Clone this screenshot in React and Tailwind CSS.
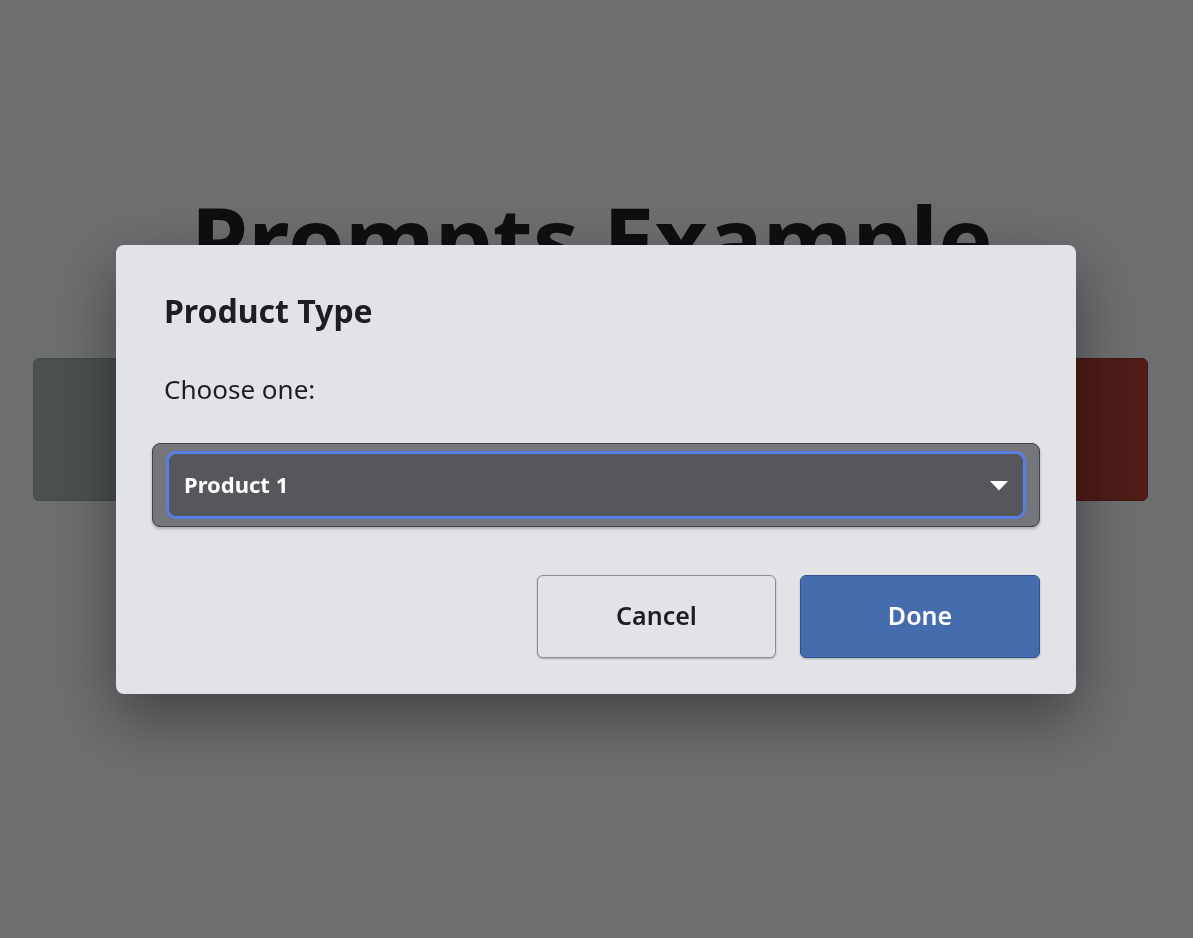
import { useState } from "react";

function App() {
  const [product, setProduct] = useState("Product 1");

  return (
    <div
      className="relative min-h-screen w-full overflow-hidden bg-[#6d6e70]"
      style={{ fontFamily: '"Noto Sans", "Open Sans", sans-serif' }}
    >
      {/* page behind the overlay */}
      <div className="flex flex-col items-center pt-[193px] pr-[9px]">
        <h1 className="text-[92px] leading-[92px] font-bold text-[#0e0f11]">
          Prompts Example
        </h1>
      </div>
      <div className="mt-[73px] flex gap-6 px-[33px] pr-[45px]">
        <div className="h-[143px] flex-1 rounded-md border border-[#444a45] bg-[#4b514c]" />
        <div className="h-[143px] flex-1 rounded-md border border-[#3c3d40] bg-[#515257]" />
        <div className="h-[143px] flex-1 rounded-md border border-[#431612] bg-[#4f1c18]" />
      </div>

      {/* dialog */}
      <div className="fixed inset-0 flex items-center justify-center pr-px">
        <div className="flex w-[960px] flex-col rounded-lg bg-[#e2e3e6] px-9 pt-[46px] pb-9 shadow-[0_24px_60px_rgba(0,0,0,0.4)]">
          <h2 className="pl-3 text-[32px] leading-[40px] font-bold text-[#1d1e21]">
            Product Type
          </h2>
          <p className="mt-[42px] pl-3 text-[26px] leading-[32px] text-[#1d1e21]">
            Choose one:
          </p>

          <div className="mt-[38px] rounded-lg border border-[#3f4146] bg-[#74767b] px-[13px] py-[7px] shadow-[0_2px_3px_rgba(0,0,0,0.25)]">
            <div className="relative rounded-[10px] border-[3px] border-[#5a7fe3] bg-[#55575c]">
              <select
                value={product}
                onChange={(e) => setProduct(e.target.value)}
                className="h-[62px] w-full appearance-none bg-transparent pl-[15px] text-[22px] font-bold text-white outline-none"
              >
                <option>Product 1</option>
                <option>Product 2</option>
                <option>Product 3</option>
              </select>
              <svg
                className="pointer-events-none absolute top-[27px] right-[15px]"
                width="18"
                height="10"
                viewBox="0 0 18 10"
              >
                <path d="M0 0 H18 L9 9.5 Z" fill="#ffffff" />
              </svg>
            </div>
          </div>

          <div className="mt-[48px] flex justify-end gap-[24px]">
            <button className="h-[83px] w-[239px] rounded-md border border-[#8d8e92] bg-[#e2e3e6] text-[25px] font-semibold text-[#1d1e21] shadow-[0_1px_2px_rgba(0,0,0,0.25)]">
              Cancel
            </button>
            <button className="h-[83px] w-[240px] rounded-md border border-[#34528a] bg-[#476cae] text-[25px] font-semibold text-white shadow-[0_1px_2px_rgba(0,0,0,0.25)]">
              Done
            </button>
          </div>
        </div>
      </div>
    </div>
  );
}

export default App;
